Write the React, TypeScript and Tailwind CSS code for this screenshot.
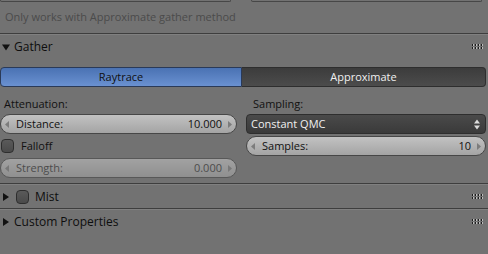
import React from "react";

const font = { fontFamily: '"Open Sans", "DejaVu Sans", sans-serif' };

function Grip() {
  const dots = [];
  for (let r = 0; r < 2; r++) {
    for (let c = 0; c < 4; c++) {
      dots.push(<rect key={`${r}-${c}`} x={c * 3} y={r * 3} width={1} height={2} fill="#1e1e1e" />);
      dots.push(<rect key={`h${r}-${c}`} x={c * 3 + 1} y={r * 3} width={1} height={2} fill="#bdbdbd" />);
    }
  }
  return (
    <svg width="12" height="6" className="ml-auto mr-[4px]">
      {dots}
    </svg>
  );
}

function Separator() {
  return (
    <div className="flex flex-col">
      <div className="h-px bg-[#3e3e3e]" />
      <div className="h-px bg-[#808080]" />
    </div>
  );
}

function Checkbox() {
  return <div className="w-[13px] h-[14px] rounded-[4px] border border-[#2e2e2e] bg-gradient-to-b from-[#5a5a5a] to-[#4a4a4a]" />;
}

function Tri({ open }: { open?: boolean }) {
  return (
    <svg width="8" height="8" viewBox="0 0 8 8" className="mr-[2px]">
      {open ? <path d="M0 1.5 L8 1.5 L4 7.5 Z" fill="#111" /> : <path d="M1 0 L7 4 L1 8 Z" fill="#111" />}
    </svg>
  );
}

function Arrow({ dir }: { dir: "l" | "r" }) {
  return (
    <svg width="4" height="7" viewBox="0 0 4 7">
      <path d={dir === "l" ? "M4 0 L0 3.5 L4 7 Z" : "M0 0 L4 3.5 L0 7 Z"} fill="#7c7c7c" />
    </svg>
  );
}

function Header({ title, open, check }: { title: string; open?: boolean; check?: boolean }) {
  return (
    <div className="flex items-center h-[23px] pl-[2px] text-[12px] text-[#0e0e0e]">
      <Tri open={open} />
      {check && (
        <span className="ml-[4px] mr-[6px]">
          <Checkbox />
        </span>
      )}
      <span className={check ? "" : "ml-[2px]"}>{title}</span>
      <Grip />
    </div>
  );
}

function Slider({ label, value, dim }: { label: string; value: string; dim?: boolean }) {
  return (
    <div
      className={`flex items-center h-[20px] rounded-full border border-[#474747] bg-gradient-to-b from-[#c2c2c2] to-[#a4a4a4] px-[4px] text-[11px] ${
        dim ? "opacity-60 text-[#333]" : "text-[#111]"
      }`}
    >
      <Arrow dir="l" />
      <span className="ml-[7px]">{label}</span>
      <span className="ml-auto mr-[6px]">{value}</span>
      <Arrow dir="r" />
    </div>
  );
}

export default function App() {
  return (
    <div style={font} className="w-[488px] h-[254px] bg-[#727272] overflow-hidden flex flex-col">
      <div className="flex h-[2px]">
        <div className="w-[231px] h-[2px] rounded-b-[4px] border-b border-x border-[#474747]" />
        <div className="ml-[20px] w-[231px] h-[2px] rounded-b-[4px] border-b border-x border-[#474747]" />
      </div>
      <div className="h-[31px] pl-[5px] pt-[7px] text-[11px] text-[#4b4b4b]">Only works with Approximate gather method</div>
      <Separator />
      <Header title="Gather" open />
      <div className="h-[9px]" />
      <div className="flex h-[20px] mr-[2px] text-[11px]">
        <div className="w-[242px] flex items-center justify-center rounded-l-[4px] border border-[#2a3a58] bg-gradient-to-b from-[#4a72b3] to-[#6a91d1] text-[#111]">
          Raytrace
        </div>
        <div className="flex-1 flex items-center justify-center rounded-r-[4px] border border-l-0 border-[#2e2e2e] bg-gradient-to-b from-[#3c3c3c] to-[#4c4c4c] text-[#f0f0f0]">
          Approximate
        </div>
      </div>
      <div className="flex mt-[7px] mr-[2px] gap-[9px]">
        <div className="w-[237px] flex flex-col">
          <div className="h-[20px] pl-[4px] flex items-center text-[11px] text-[#111]">Attenuation:</div>
          <Slider label="Distance:" value="10.000" />
          <div className="flex items-center h-[24px] pl-[1px] text-[11px] text-[#111]">
            <Checkbox />
            <span className="ml-[7px]">Falloff</span>
          </div>
          <Slider label="Strength:" value="0.000" dim />
        </div>
        <div className="flex-1 flex flex-col">
          <div className="h-[20px] pl-[7px] flex items-center text-[11px] text-[#111]">Sampling:</div>
          <div className="flex items-center h-[20px] rounded-[4px] border border-[#2e2e2e] bg-gradient-to-b from-[#4a4a4a] to-[#3a3a3a] pl-[4px] pr-[4px] text-[11px] text-[#f0f0f0]">
            <span>Constant QMC</span>
            <svg width="6" height="11" viewBox="0 0 6 11" className="ml-auto mr-[1px]">
              <path d="M0 4.5 L3 0.5 L6 4.5 Z M0 6.5 L6 6.5 L3 10.5 Z" fill="#dcdcdc" />
            </svg>
          </div>
          <div className="h-[2px]" />
          <Slider label="Samples:" value="10" />
        </div>
      </div>
      <div className="h-[5px]" />
      <Separator />
      <Header title="Mist" check />
      <Separator />
      <Header title="Custom Properties" />
    </div>
  );
}
